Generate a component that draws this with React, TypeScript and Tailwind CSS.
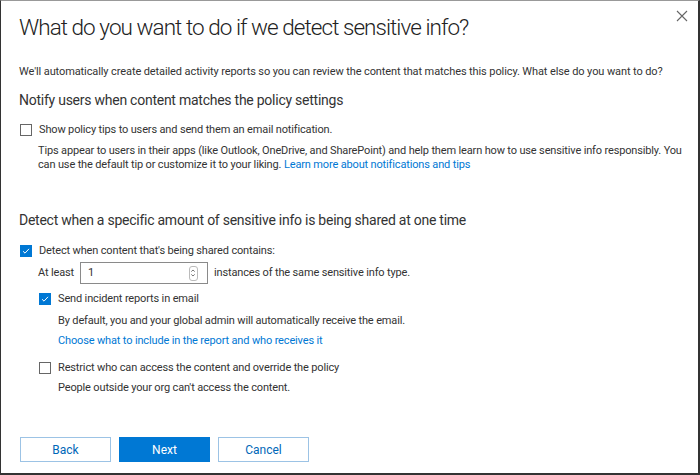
import * as React from "react";

const font = { fontFamily: 'Roboto, "Open Sans", sans-serif' };

function Box({ checked }: { checked?: boolean }) {
	if (checked) {
		return (
			<span className="flex h-[12px] w-[12px] shrink-0 items-center justify-center bg-[#0078d4]">
				<svg viewBox="0 0 12 12" className="h-[10px] w-[10px]">
					<path d="M2.5 6.3 L4.8 8.6 L9.6 3.4" fill="none" stroke="#fff" strokeWidth="1.2" />
				</svg>
			</span>
		);
	}
	return <span className="h-[12px] w-[12px] shrink-0 border border-[#666] bg-white" />;
}

function Spinner() {
	return (
		<span className="flex h-[15px] w-[9px] flex-col items-center justify-center rounded-[3px] border border-[#bbb]">
			<svg viewBox="0 0 8 12" className="h-[12px] w-[8px]">
				<path d="M2.3 4.6 L4 3 L5.7 4.6" fill="none" stroke="#666" strokeWidth="0.9" />
				<path d="M2.3 7.4 L4 9 L5.7 7.4" fill="none" stroke="#666" strokeWidth="0.9" />
			</svg>
		</span>
	);
}

export default function App() {
	return (
		<div
			style={font}
			className="relative h-[475px] w-[700px] overflow-hidden border-t border-l border-r-2 border-b-2 border-t-[#999] border-l-[#333] border-r-[#333] border-b-[#333] bg-white text-[#333]"
		>
			<button type="button" className="absolute right-[10px] top-[9px] text-[#666]" aria-label="Close">
				<svg viewBox="0 0 12 12" className="h-[12px] w-[12px]">
					<path d="M1 1 L11 11 M11 1 L1 11" stroke="currentColor" strokeWidth="1.1" />
				</svg>
			</button>

			<div className="pl-[18px] pr-[12px]">
				<h1 className="pt-[11px] text-[22.5px] font-light leading-[30px] tracking-[-0.95px] text-[#222]">
					What do you want to do if we detect sensitive info?
				</h1>

				<p className="mt-[22px] text-[11px] leading-[16px] tracking-[-0.1px]">
					We'll automatically create detailed activity reports so you can review the content that matches
					this policy. What else do you want to do?
				</p>

				<h2 className="mt-[10px] text-[14px] leading-[20px] tracking-[-0.25px]">
					Notify users when content matches the policy settings
				</h2>

				<div className="mt-[12px] flex items-center gap-[7px] pl-[1px]">
					<Box />
					<span className="text-[11px] leading-[16px] tracking-[-0.15px]">
						Show policy tips to users and send them an email notification.
					</span>
				</div>

				<p className="mt-[6px] pl-[19px] text-[11px] leading-[14px] tracking-[-0.15px]">
					Tips appear to users in their apps (like Outlook, OneDrive, and SharePoint) and help them learn how
					to use sensitive info responsibly. You can use the default tip or customize it to your liking.{" "}
					<a className="text-[#0078d4]">Learn more about notifications and tips</a>
				</p>

				<h2 className="mt-[38px] text-[14px] leading-[20px] tracking-[-0.25px]">
					Detect when a specific amount of sensitive info is being shared at one time
				</h2>

				<div className="mt-[13px] flex items-center gap-[7px] pl-[1px]">
					<Box checked />
					<span className="text-[11px] leading-[16px] tracking-[-0.15px]">
						Detect when content that's being shared contains:
					</span>
				</div>

				<div className="mt-[3px] flex items-center pl-[19px] text-[11px] tracking-[-0.15px]">
					<span>At least</span>
					<div className="ml-[6px] flex h-[22px] w-[128px] items-center justify-between border border-[#8a8a8a] pl-[7px] pr-[9px]">
						<span>1</span>
						<Spinner />
					</div>
					<span className="ml-[6px]">instances of the same sensitive info type.</span>
				</div>

				<div className="pl-[20px] text-[11px] tracking-[-0.15px]">
					<div className="mt-[7px] flex items-center gap-[7px]">
						<Box checked />
						<span className="leading-[16px]">Send incident reports in email</span>
					</div>
					<p className="mt-[6px] pl-[19px] leading-[16px]">
						By default, you and your global admin will automatically receive the email.
					</p>
					<p className="mt-[4px] pl-[19px] leading-[16px]">
						<a className="text-[#0078d4]">Choose what to include in the report and who receives it</a>
					</p>
					<div className="mt-[11px] flex items-center gap-[7px]">
						<Box />
						<span className="leading-[16px]">Restrict who can access the content and override the policy</span>
					</div>
					<p className="mt-[4px] pl-[19px] leading-[16px]">People outside your org can't access the content.</p>
				</div>

				<div className="mt-[41px] flex gap-[8px] pl-[1px] text-[12px]">
					<button type="button" className="h-[25px] w-[91px] border border-[#9cc3e5] bg-white text-[#0067b8]">
						Back
					</button>
					<button type="button" className="h-[25px] w-[91px] border border-[#0078d4] bg-[#0078d4] text-white">
						Next
					</button>
					<button type="button" className="h-[25px] w-[91px] border border-[#9cc3e5] bg-white text-[#0067b8]">
						Cancel
					</button>
				</div>
			</div>
		</div>
	);
}
